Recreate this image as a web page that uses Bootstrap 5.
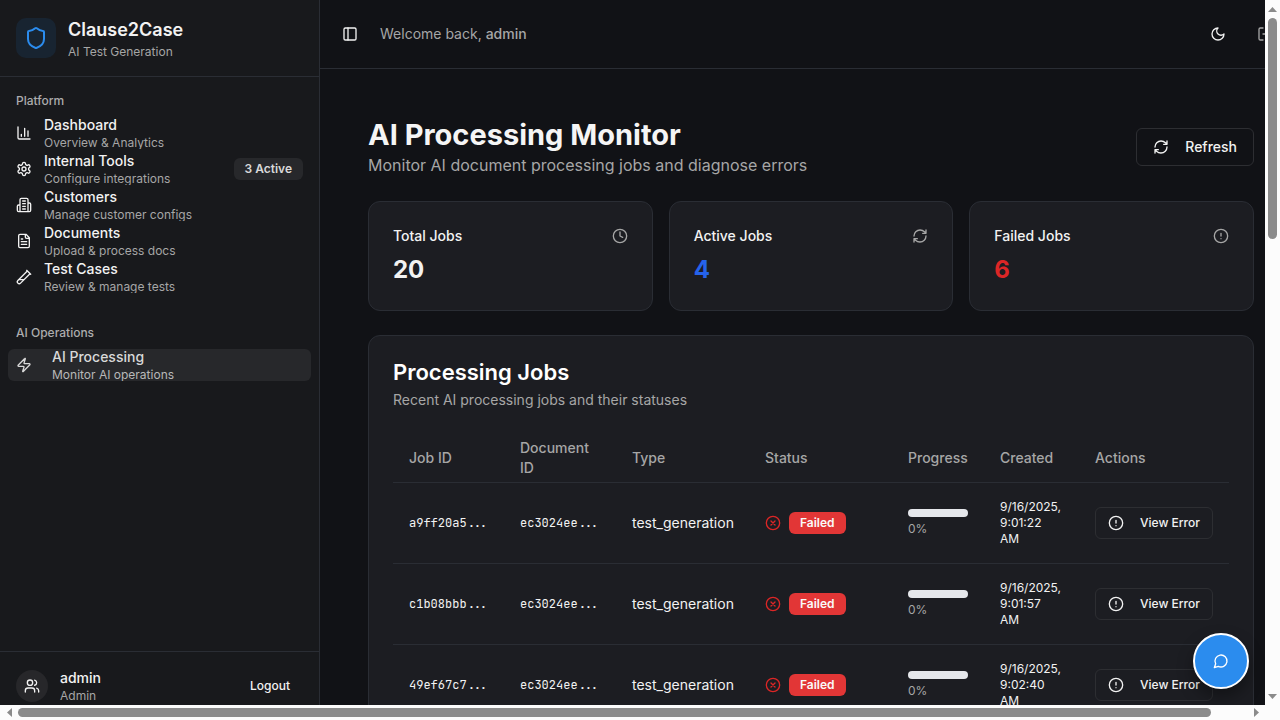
<!DOCTYPE html>
<html lang="en" data-bs-theme="dark">
<head>
<meta charset="utf-8">
<meta name="viewport" content="width=device-width, initial-scale=1">
<title>Clause2Case – AI Processing Monitor</title>
<link href="https://cdn.jsdelivr.net/npm/bootstrap@5.3.0/dist/css/bootstrap.min.css" rel="stylesheet">
<style>
:root{--bg:#111216;--side:#18191c;--panel:#1c1d22;--line:#2a2d34;--fg:#f2f2f2;--muted:#a6a6a6;--blue:#2b8cee}
body{font-family:Inter,"Liberation Sans",sans-serif;font-size:14px;line-height:20px;color:var(--fg);background:var(--bg);overflow:hidden}
.lc{width:16px;height:16px;fill:none;stroke:currentColor;stroke-width:2;stroke-linecap:round;stroke-linejoin:round;flex:none}
.frame{display:grid;grid-template:minmax(0,1fr) 15px / minmax(0,1fr) 15px;height:100vh}
.view{position:relative;overflow:hidden}
.txt-xs{font-size:12px;line-height:16px}
.txt-medium{font-weight:500}
/* sidebar */
.sidebar{width:320px;height:100vh;background:var(--side);border-right:1px solid var(--line)}
.brand{height:77px;border-bottom:1px solid var(--line)}
.brand-logo{width:40px;height:40px;border-radius:10px;background:#182431;color:var(--blue)}
.brand-logo .lc{width:24px;height:24px}
.brand-name{font-size:18px;line-height:28px;font-weight:600}
.group-label{height:32px;font-size:12px;font-weight:500;color:#acacad}
.side-link{height:32px;overflow:hidden;border-radius:6px;color:var(--fg);text-decoration:none}
.side-link:hover,.side-link.current{background:#27282b}
.side-link.current{color:#d9d9d9}
.side-link.current .labels{margin-left:8px}
.side-link.current .txt-xs{color:#b8b8b8}
.side-link .labels{display:block;margin:-2px 0}
.side-link .labels span{display:block}
.pill{font-size:12px;line-height:16px;font-weight:600;padding:3px 11px;border-radius:6px}
.pill-count{background:#27282b;color:#d9d9d9}
.pill-failed{background:#e23636;color:#fafafa}
.user-bar{height:69px;border-top:1px solid var(--line)}
.avatar{width:32px;height:32px;background:#27272a}
/* main column extends beyond the horizontally scrolled view */
.main{margin-right:-37px}
.topbar{height:69px;border-bottom:1px solid var(--line)}
.bare{border:0;background:none;color:var(--fg);padding:0;height:28px}
.w-toggle{width:28px}
.w-theme{width:36px}
.w-exit{width:42px}
.page{padding:48px}
.page-title{font-size:29px;line-height:36px;font-weight:700;color:#f5f5f5}
.lead-text{font-size:16px;line-height:24px}
.btn-line{--bs-btn-color:var(--fg);--bs-btn-border-color:#2d2e32;--bs-btn-hover-color:#fff;--bs-btn-hover-bg:#27282b;--bs-btn-hover-border-color:#3a3b40;border-radius:6px;font-weight:500;gap:16px}
.btn-md{font-size:14px;line-height:20px;padding:8px 16px}
.btn-xs{font-size:12px;line-height:16px;padding:7px 12px}
.panel{background:var(--panel);border:1px solid var(--line);border-radius:12px;padding:24px}
.stat{font-size:24px;line-height:32px;font-weight:700}
.panel-title{font-size:22px;line-height:24px;font-weight:600}
.sub-gap{margin-top:6px}
.jobs{--bs-table-bg:transparent;--bs-table-color:var(--fg);table-layout:fixed;border-color:var(--line)}
.jobs th{height:48px;padding:4px 16px;font-weight:500;color:var(--muted);vertical-align:middle;background:none}
.jobs td{padding:16px;vertical-align:middle;background:none;white-space:nowrap}
.jobs .when{white-space:normal;font-size:12px;line-height:16px}
.c1{width:111px}
.c2{width:112px}
.c3{width:133px}
.c4{width:143px}
.c5{width:92px}
.c6{width:95px}
.mono{font-family:"JetBrains Mono","Liberation Mono",monospace;font-size:12px}
.meter{height:8px;border-radius:4px;background:#e5e7eb}
.chat{position:absolute;right:16px;bottom:16px;width:56px;height:56px;border:2px solid #fff;background:var(--blue);color:#fff;box-shadow:0 8px 16px rgba(0,0,0,.35)}
.txt-muted{color:var(--muted)}
.is-blue{color:#2563eb}
.is-red{color:#dc2626}
/* scroll bars */
.bar{background:#fcfcfc}
.bar .track{flex:1;display:flex}
.bar .thumb{background:#8b8b8b;border-radius:5px}
.bar .end{display:flex;align-items:center;justify-content:center;flex:none}
.bar svg{fill:#8b8b8b;display:block}
.bar-v .end{height:18px}
.bar-v .track{justify-content:center}
.bar-v .thumb{width:9px}
.bar-h .end{width:18px}
.bar-h .track{align-items:center}
.bar-h .thumb{height:9px}
</style>
</head>
<body>
<svg class="d-none" aria-hidden="true">
<symbol id="shield" viewBox="0 0 24 24"><path d="M20 13c0 5-3.5 7.5-7.66 8.95a1 1 0 0 1-.67-.01C7.5 20.5 4 18 4 13V6a1 1 0 0 1 1-1c2 0 4.5-1.2 6.24-2.72a1.17 1.17 0 0 1 1.52 0C14.51 3.81 17 5 19 5a1 1 0 0 1 1 1z"/></symbol>
<symbol id="chart" viewBox="0 0 24 24"><path d="M3 3v16a2 2 0 0 0 2 2h16M18 17V9M13 17V5M8 17v-3"/></symbol>
<symbol id="gear" viewBox="0 0 24 24"><path d="M12.22 2h-.44a2 2 0 0 0-2 2v.18a2 2 0 0 1-1 1.73l-.43.25a2 2 0 0 1-2 0l-.15-.08a2 2 0 0 0-2.73.73l-.22.38a2 2 0 0 0 .73 2.73l.15.1a2 2 0 0 1 1 1.72v.51a2 2 0 0 1-1 1.74l-.15.09a2 2 0 0 0-.73 2.73l.22.38a2 2 0 0 0 2.73.73l.15-.08a2 2 0 0 1 2 0l.43.25a2 2 0 0 1 1 1.73V20a2 2 0 0 0 2 2h.44a2 2 0 0 0 2-2v-.18a2 2 0 0 1 1-1.73l.43-.25a2 2 0 0 1 2 0l.15.08a2 2 0 0 0 2.73-.73l.22-.39a2 2 0 0 0-.73-2.73l-.15-.08a2 2 0 0 1-1-1.74v-.5a2 2 0 0 1 1-1.74l.15-.09a2 2 0 0 0 .73-2.73l-.22-.38a2 2 0 0 0-2.73-.73l-.15.08a2 2 0 0 1-2 0l-.43-.25a2 2 0 0 1-1-1.73V4a2 2 0 0 0-2-2z"/><circle cx="12" cy="12" r="3"/></symbol>
<symbol id="building" viewBox="0 0 24 24"><path d="M6 22V4a2 2 0 0 1 2-2h8a2 2 0 0 1 2 2v18ZM6 12H4a2 2 0 0 0-2 2v6a2 2 0 0 0 2 2h2M18 9h2a2 2 0 0 1 2 2v9a2 2 0 0 1-2 2h-2M10 6h4M10 10h4M10 14h4M10 18h4"/></symbol>
<symbol id="file" viewBox="0 0 24 24"><path d="M15 2H6a2 2 0 0 0-2 2v16a2 2 0 0 0 2 2h12a2 2 0 0 0 2-2V7ZM14 2v4a2 2 0 0 0 2 2h4M10 9H8M16 13H8M16 17H8"/></symbol>
<symbol id="tube" viewBox="0 0 24 24"><path d="M21 7 6.82 21.18a2.83 2.83 0 0 1-3.99-.01a2.83 2.83 0 0 1 0-4L17 3M16 2l6 6M12 16H4"/></symbol>
<symbol id="zap" viewBox="0 0 24 24"><path d="M4 14a1 1 0 0 1-.78-1.63l9.9-10.2a.5.5 0 0 1 .86.46l-1.92 6.02A1 1 0 0 0 13 10h7a1 1 0 0 1 .78 1.63l-9.9 10.2a.5.5 0 0 1-.86-.46l1.92-6.02A1 1 0 0 0 11 14z"/></symbol>
<symbol id="users" viewBox="0 0 24 24"><path d="M16 21v-2a4 4 0 0 0-4-4H6a4 4 0 0 0-4 4v2M22 21v-2a4 4 0 0 0-3-3.87M16 3.13a4 4 0 0 1 0 7.75"/><circle cx="9" cy="7" r="4"/></symbol>
<symbol id="side" viewBox="0 0 24 24"><rect x="3" y="3" width="18" height="18" rx="2"/><path d="M9 3v18"/></symbol>
<symbol id="moon" viewBox="0 0 24 24"><path d="M12 3a6 6 0 0 0 9 9 9 9 0 1 1-9-9Z"/></symbol>
<symbol id="exit" viewBox="0 0 24 24"><path d="M9 21H5a2 2 0 0 1-2-2V5a2 2 0 0 1 2-2h4M16 17l5-5-5-5M21 12H9"/></symbol>
<symbol id="refresh" viewBox="0 0 24 24"><path d="M3 12a9 9 0 0 1 9-9 9.75 9.75 0 0 1 6.74 2.74L21 8M21 3v5h-5M21 12a9 9 0 0 1-9 9 9.75 9.75 0 0 1-6.74-2.74L3 16M8 16H3v5"/></symbol>
<symbol id="clock" viewBox="0 0 24 24"><circle cx="12" cy="12" r="10"/><path d="M12 6v6l4 2"/></symbol>
<symbol id="alert" viewBox="0 0 24 24"><circle cx="12" cy="12" r="10"/><path d="M12 8v4M12 16h.01"/></symbol>
<symbol id="fail" viewBox="0 0 24 24"><circle cx="12" cy="12" r="10"/><path d="M15 9l-6 6M9 9l6 6"/></symbol>
<symbol id="chat" viewBox="0 0 24 24"><path d="M7.9 20A9 9 0 1 0 4 16.1L2 22Z"/></symbol>
</svg>

<div class="frame">
<div class="view d-flex">

<aside class="sidebar d-flex flex-column flex-shrink-0">
  <div class="brand d-flex align-items-center px-3 flex-shrink-0">
    <div class="brand-logo d-flex align-items-center justify-content-center me-2"><svg class="lc"><use href="#shield"/></svg></div>
    <div class="ms-1"><div class="brand-name">Clause2Case</div><div class="txt-xs txt-muted">AI Test Generation</div></div>
  </div>
  <nav class="flex-grow-1 d-flex flex-column gap-2">
    <div class="p-2">
      <div class="group-label d-flex align-items-center px-2">Platform</div>
      <div class="d-flex flex-column gap-1">
        <a href="#" class="side-link d-flex align-items-center px-2"><svg class="lc me-2"><use href="#chart"/></svg><span class="labels ms-1"><span class="txt-medium">Dashboard</span><span class="txt-xs txt-muted">Overview &amp; Analytics</span></span></a>
        <a href="#" class="side-link d-flex align-items-center px-2"><svg class="lc me-2"><use href="#gear"/></svg><span class="labels ms-1"><span class="txt-medium">Internal Tools</span><span class="txt-xs txt-muted">Configure integrations</span></span><span class="pill pill-count ms-auto">3 Active</span></a>
        <a href="#" class="side-link d-flex align-items-center px-2"><svg class="lc me-2"><use href="#building"/></svg><span class="labels ms-1"><span class="txt-medium">Customers</span><span class="txt-xs txt-muted">Manage customer configs</span></span></a>
        <a href="#" class="side-link d-flex align-items-center px-2"><svg class="lc me-2"><use href="#file"/></svg><span class="labels ms-1"><span class="txt-medium">Documents</span><span class="txt-xs txt-muted">Upload &amp; process docs</span></span></a>
        <a href="#" class="side-link d-flex align-items-center px-2"><svg class="lc me-2"><use href="#tube"/></svg><span class="labels ms-1"><span class="txt-medium">Test Cases</span><span class="txt-xs txt-muted">Review &amp; manage tests</span></span></a>
      </div>
    </div>
    <div class="p-2">
      <div class="group-label d-flex align-items-center px-2">AI Operations</div>
      <a href="#" class="side-link current d-flex align-items-center px-2" aria-current="page"><svg class="lc me-2"><use href="#zap"/></svg><span class="labels ps-1"><span class="txt-medium">AI Processing</span><span class="txt-xs">Monitor AI operations</span></span></a>
    </div>
  </nav>
  <div class="user-bar d-flex align-items-center px-3 flex-shrink-0">
    <div class="avatar rounded-circle d-flex align-items-center justify-content-center me-2"><svg class="lc"><use href="#users"/></svg></div>
    <div class="ms-1"><div class="txt-medium">admin</div><div class="txt-xs txt-muted">Admin</div></div>
    <button type="button" class="btn btn-line btn-xs ms-auto border-transparent" style="--bs-btn-border-color:transparent">Logout</button>
  </div>
</aside>

<div class="main flex-grow-1">
  <header class="topbar d-flex align-items-center px-3">
    <button type="button" class="bare w-toggle d-flex align-items-center justify-content-center" aria-label="Toggle sidebar"><svg class="lc"><use href="#side"/></svg></button>
    <span class="txt-muted ms-3">Welcome back, <span class="txt-medium">admin</span></span>
    <button type="button" class="bare w-theme d-flex align-items-center justify-content-center ms-auto me-2" aria-label="Toggle theme"><svg class="lc"><use href="#moon"/></svg></button>
    <button type="button" class="bare w-exit txt-muted d-flex align-items-center justify-content-center" aria-label="Log out"><svg class="lc"><use href="#exit"/></svg></button>
  </header>
  <main class="page">
    <div class="d-flex align-items-center justify-content-between mb-4">
      <div><h1 class="page-title mb-0">AI Processing Monitor</h1><p class="lead-text txt-muted mb-0">Monitor AI document processing jobs and diagnose errors</p></div>
      <button type="button" class="btn btn-line btn-md d-flex align-items-center"><svg class="lc"><use href="#refresh"/></svg>Refresh</button>
    </div>
    <div class="row g-3 mb-4">
      <div class="col-4"><section class="panel"><div class="d-flex justify-content-between align-items-center mb-2"><span class="txt-medium">Total Jobs</span><svg class="lc txt-muted"><use href="#clock"/></svg></div><div class="stat">20</div></section></div>
      <div class="col-4"><section class="panel"><div class="d-flex justify-content-between align-items-center mb-2"><span class="txt-medium">Active Jobs</span><svg class="lc txt-muted"><use href="#refresh"/></svg></div><div class="stat is-blue">4</div></section></div>
      <div class="col-4"><section class="panel"><div class="d-flex justify-content-between align-items-center mb-2"><span class="txt-medium">Failed Jobs</span><svg class="lc txt-muted"><use href="#alert"/></svg></div><div class="stat is-red">6</div></section></div>
    </div>
    <section class="panel">
      <h2 class="panel-title mb-0">Processing Jobs</h2>
      <p class="txt-muted sub-gap mb-4">Recent AI processing jobs and their statuses</p>
      <table class="table jobs mb-0">
        <colgroup><col class="c1"><col class="c2"><col class="c3"><col class="c4"><col class="c5"><col class="c6"><col></colgroup>
        <thead><tr><th>Job ID</th><th>Document ID</th><th>Type</th><th>Status</th><th>Progress</th><th>Created</th><th>Actions</th></tr></thead>
        <tbody>
        <tr><td class="mono">a9ff20a5...</td><td class="mono">ec3024ee...</td><td>test_generation</td><td><div class="d-flex align-items-center gap-2"><svg class="lc is-red"><use href="#fail"/></svg><span class="pill pill-failed">Failed</span></div></td><td><div class="meter mb-1"></div><div class="txt-xs txt-muted">0%</div></td><td class="when">9/16/2025, 9:01:22 AM</td><td><button type="button" class="btn btn-line btn-xs d-flex align-items-center"><svg class="lc"><use href="#alert"/></svg>View Error</button></td></tr>
        <tr><td class="mono">c1b08bbb...</td><td class="mono">ec3024ee...</td><td>test_generation</td><td><div class="d-flex align-items-center gap-2"><svg class="lc is-red"><use href="#fail"/></svg><span class="pill pill-failed">Failed</span></div></td><td><div class="meter mb-1"></div><div class="txt-xs txt-muted">0%</div></td><td class="when">9/16/2025, 9:01:57 AM</td><td><button type="button" class="btn btn-line btn-xs d-flex align-items-center"><svg class="lc"><use href="#alert"/></svg>View Error</button></td></tr>
        <tr><td class="mono">49ef67c7...</td><td class="mono">ec3024ee...</td><td>test_generation</td><td><div class="d-flex align-items-center gap-2"><svg class="lc is-red"><use href="#fail"/></svg><span class="pill pill-failed">Failed</span></div></td><td><div class="meter mb-1"></div><div class="txt-xs txt-muted">0%</div></td><td class="when">9/16/2025, 9:02:40 AM</td><td><button type="button" class="btn btn-line btn-xs d-flex align-items-center"><svg class="lc"><use href="#alert"/></svg>View Error</button></td></tr>
        </tbody>
      </table>
    </section>
  </main>
</div>

<button type="button" class="chat rounded-circle d-flex align-items-center justify-content-center p-0" aria-label="Open chat"><svg class="lc"><use href="#chat"/></svg></button>
</div>

<div class="bar bar-v d-flex flex-column" aria-hidden="true">
  <div class="end"><svg width="9" height="5"><path d="M0 5 4.5 0 9 5z"/></svg></div>
  <div class="track"><div class="thumb" style="height:33%"></div></div>
  <div class="end"><svg width="9" height="5"><path d="M0 0h9L4.5 5z"/></svg></div>
</div>
<div class="bar bar-h d-flex" aria-hidden="true">
  <div class="end"><svg width="5" height="9"><path d="M5 0v9L0 4.5z"/></svg></div>
  <div class="track"><div class="thumb" style="width:97.1%"></div></div>
  <div class="end"><svg width="5" height="9"><path d="M0 0l5 4.5L0 9z"/></svg></div>
</div>
<div class="bar"></div>
</div>
<script src="https://cdn.jsdelivr.net/npm/bootstrap@5.3.0/dist/js/bootstrap.bundle.min.js"></script>
</body>
</html>
